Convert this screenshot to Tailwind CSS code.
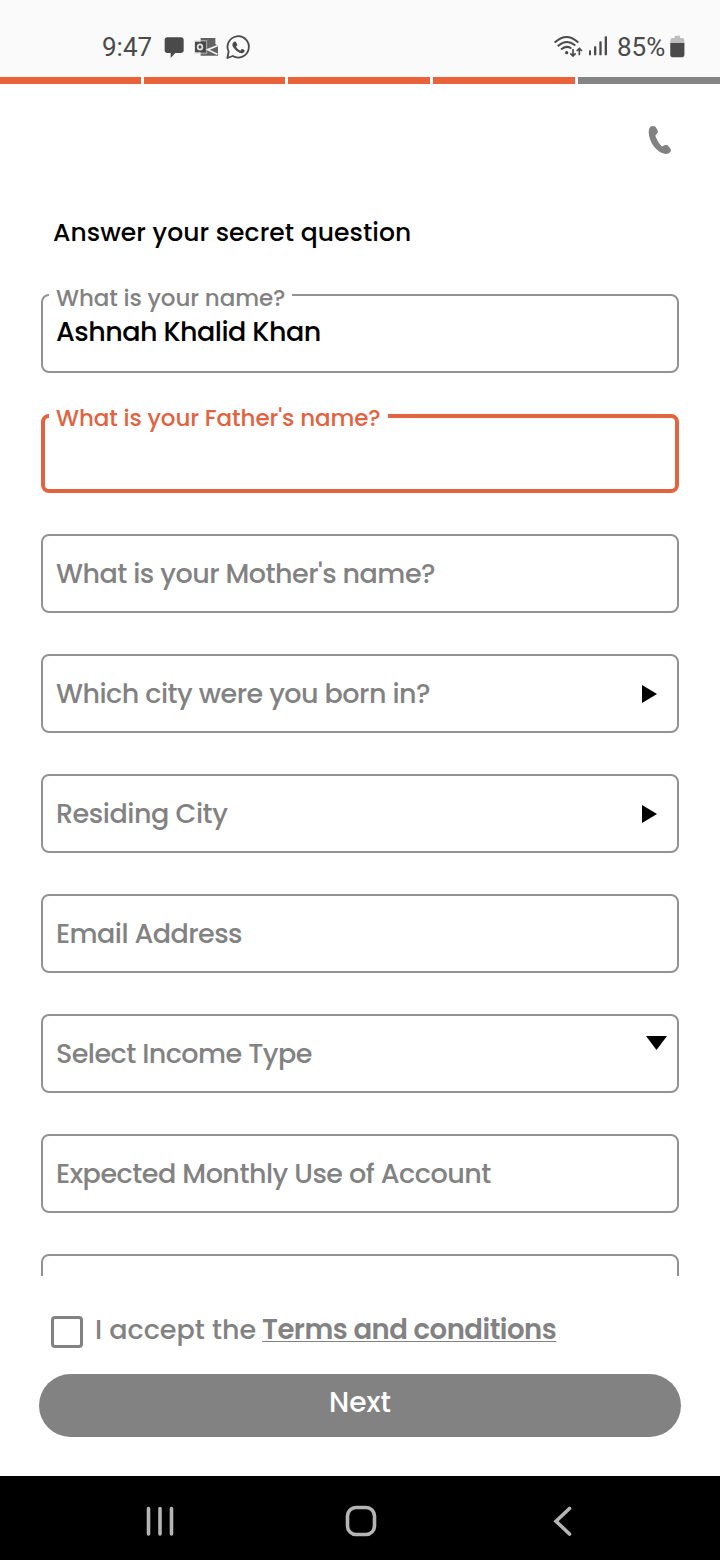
<!DOCTYPE html>
<html lang="en">
<head>
<meta charset="utf-8">
<title>Secret question</title>
<script src="https://cdn.jsdelivr.net/npm/@tailwindcss/browser@4"></script>
</head>
<body class="flex h-[1560px] w-[720px] flex-col overflow-hidden bg-white font-['Poppins','Inter',sans-serif] font-medium text-[#828282]">
  <!-- Status bar -->
  <div class="flex h-[77px] shrink-0 items-start bg-[#fafafa] font-['Roboto',sans-serif] text-[26px] font-normal text-[#4a4a4a]">
    <span class="ml-[102px] mt-[32px] w-[62px] leading-[30px] whitespace-nowrap">9:47</span>
    <svg class="mt-[36px] h-[24px] w-[22px]" viewBox="0 0 66 72" fill="#4a4a4a"><path d="M10 4H50Q59 4 59 12V43Q59 51 50 51H34L20 66V51H10Q2 51 2 43V12Q2 4 10 4Z"/></svg>
    <svg class="ml-[8px] mt-[37px] h-[22px] w-[26px]" viewBox="0 0 78 66"><path fill="#626262" d="M20 3H64V20L72 28V56H20Z"/><path fill="#4a4a4a" d="M3 14H36V46H3Z"/><ellipse cx="18" cy="30" rx="7" ry="8" fill="none" stroke="#e6e6e6" stroke-width="5"/><path d="M1 11H38V49H1Z" fill="none" stroke="#d8d8d8" stroke-width="2"/><path d="M70 26 41 38 70 52" fill="none" stroke="#f5f5f5" stroke-width="5"/></svg>
    <svg class="ml-[5px] mt-[34px] h-[27px] w-[26px]" viewBox="-2 0 78 81" fill="none"><path d="M9 53A32 32 0 1 1 21 66L5 72Z" stroke="#4a4a4a" stroke-width="5.500" stroke-linejoin="round"/><path fill="#4a4a4a" d="M24 24Q28 21 31 24L35 32Q34 35 31 38Q35 46 44 50L48 45Q51 44 57 49Q58 54 52 57Q45 60 33 51Q21 41 20 33Q20 28 24 24Z"/></svg>
    <svg class="ml-[303px] mt-[34px] h-[24px] w-[29px]" viewBox="0 0 87 72" fill="none" stroke="#4a4a4a"><g stroke-width="6" stroke-linecap="round"><path d="M4 24Q38-6 71 24M13 35Q38 14 62 33M23 45Q37 34 50 42"/></g><circle cx="38" cy="56" r="5" fill="#4a4a4a" stroke="none"/><path stroke-width="5" d="M57 45V66M49 58 57 66 65 58M76 64V43M68 51 76 43 84 51"/></svg>
    <svg class="ml-[5px] mt-[35px] h-[22px] w-[20px]" viewBox="0 0 60 66" fill="#4a4a4a"><rect x="3" y="46" width="6" height="15" rx="2"/><rect x="18" y="34" width="7" height="27" rx="2"/><rect x="34" y="19" width="7" height="42" rx="2"/><rect x="50" y="4" width="7" height="57" rx="2"/></svg>
    <span class="ml-[9px] mt-[32px] w-[53px] leading-[30px] whitespace-nowrap">85%</span>
    <svg class="mt-[35px] h-[24px] w-[15px]" viewBox="0 0 45 72"><path fill="#bdbdbd" d="M14 2H30V9H37Q43 9 43 16V61Q43 68 37 68H7Q1 68 1 61V16Q1 9 7 9H14Z"/><path fill="#4a4a4a" d="M1 24H43V59Q43 66 37 66H7Q1 66 1 59Z"/></svg>
  </div>
  <!-- Step progress -->
  <div class="grid h-[7px] shrink-0 grid-cols-[141px_141px_142px_142px_142px] gap-[3px] bg-white">
    <div class="bg-[#e9623a]"></div><div class="bg-[#e9623a]"></div><div class="bg-[#e9623a]"></div><div class="bg-[#e9623a]"></div><div class="bg-[#858585]"></div>
  </div>
  <div class="flex h-[133px] shrink-0 justify-end pt-[41px] pr-[48px]">
    <svg class="h-[30px] w-[24px]" viewBox="324 315 72 90" fill="#828282"><path d="M331 320Q340 315 347 321L354 333Q355 339 349 343Q345 346 347 350Q354 367 364 378Q367 381 370 377Q376 373 383 376L392 387Q394 391 391 396Q385 403 376 402Q357 399 341 379Q327 359 326 337Q326 325 331 320Z"/></svg>
  </div>
  <h1 class="ml-[53px] h-[77px] shrink-0 text-[25px] leading-[32px] tracking-[0.060px] whitespace-nowrap text-black">Answer your secret question</h1>
  <!-- Scrolling form -->
  <main class="-mt-[14px] flex h-[996px] shrink-0 flex-col gap-[41px] overflow-hidden px-[41px] pt-[14px]">
    <div class="relative flex h-[79px] shrink-0 rounded-[8px] border-2 border-[#929292] pl-[13px] pt-[19px]">
      <span class="absolute -top-[12px] left-[6px] h-[28px] w-[243px] bg-white pl-[7px] text-[23px] leading-[28px] tracking-[-0.1px] whitespace-nowrap">What is your name?</span>
      <span class="text-[27px] leading-[34px] tracking-[-0.520px] whitespace-nowrap text-black">Ashnah Khalid Khan</span>
    </div>
    <div class="relative h-[79px] shrink-0 rounded-[8px] border-4 border-[#e2633f]">
      <span class="absolute -top-[14px] left-[4px] h-[28px] w-[339px] bg-white pl-[7px] text-[23px] leading-[28px] tracking-[-0.1px] whitespace-nowrap text-[#e2633f]">What is your Father's name?</span>
    </div>
    <div class="flex h-[79px] shrink-0 items-center rounded-[8px] border-2 border-[#929292] pt-[2px] pl-[13px] text-[27px] tracking-[-0.520px] whitespace-nowrap"><span>What is your Mother's name?</span></div>
    <div class="flex h-[79px] shrink-0 items-center justify-between rounded-[8px] border-2 border-[#929292] pr-[20px] pl-[13px] text-[27px] tracking-[-0.520px] whitespace-nowrap"><span class="pt-[2px]">Which city were you born in?</span><svg class="h-[18px] w-[15px]" viewBox="0 0 15 18"><path d="M0 0 15 9 0 18Z"/></svg></div>
    <div class="flex h-[79px] shrink-0 items-center justify-between rounded-[8px] border-2 border-[#929292] pr-[20px] pl-[13px] text-[27px] tracking-[-0.450px] whitespace-nowrap"><span class="pt-[2px]">Residing City</span><svg class="h-[18px] w-[15px]" viewBox="0 0 15 18"><path d="M0 0 15 9 0 18Z"/></svg></div>
    <div class="flex h-[79px] shrink-0 items-center rounded-[8px] border-2 border-[#929292] pt-[2px] pl-[13px] text-[27px] tracking-[-0.550px] whitespace-nowrap"><span>Email Address</span></div>
    <div class="flex h-[79px] shrink-0 items-center justify-between rounded-[8px] border-2 border-[#929292] pr-[10px] pl-[13px] text-[27px] tracking-[-0.550px] whitespace-nowrap"><span class="pt-[2px]">Select Income Type</span><svg class="mt-[20px] h-[14px] w-[21px] self-start" viewBox="0 0 21 14"><path d="M0 0H21L10.500 14Z"/></svg></div>
    <div class="flex h-[79px] shrink-0 items-center rounded-[8px] border-2 border-[#929292] pt-[2px] pl-[13px] text-[27px] tracking-[-0.500px] whitespace-nowrap"><span>Expected Monthly Use of Account</span></div>
    <div class="h-[79px] shrink-0 rounded-[8px] border-2 border-[#929292]"></div>
  </main>
  <!-- Consent and submit -->
  <div class="flex h-[98px] shrink-0 items-start pl-[51px] pt-[36px] text-[27px] leading-[36px] whitespace-nowrap">
    <div class="mt-[4px] mr-[12px] size-[32px] rounded-[4px] border-[3.500px] border-[#828282]"></div>
    <span class="w-[167px]">I accept the</span><span class="text-[27.500px] font-semibold tracking-[-0.480px] underline decoration-1 underline-offset-[2px] [text-decoration-skip-ink:none]">Terms and conditions</span>
  </div>
  <button class="mx-[39px] h-[63px] shrink-0 rounded-full bg-[#828282] pb-[5px] text-[28px] font-medium text-white"><span>Next</span></button>
  <!-- System navigation -->
  <nav class="mt-auto flex h-[84px] shrink-0 items-start bg-black pt-[28px]">
    <svg class="ml-[144px] h-[34px] w-[32px]" viewBox="0 0 32 34" stroke="#b5b5b5" stroke-width="3.600" stroke-linecap="round"><path d="M4.500 4.500V30M16 4.500V30M27.500 4.500V30"/></svg>
    <svg class="ml-[168px] h-[34px] w-[34px]" viewBox="0 0 34 34" fill="none" stroke="#b5b5b5" stroke-width="3.600"><rect x="3.500" y="3.500" width="27" height="27" rx="8.500"/></svg>
    <svg class="ml-[175px] h-[34px] w-[20px]" viewBox="0 0 20 34" fill="none" stroke="#b5b5b5" stroke-width="3.600" stroke-linecap="round"><path d="M16.500 4.500 3 17.200 16.500 30"/></svg>
  </nav>
</body>
</html>
